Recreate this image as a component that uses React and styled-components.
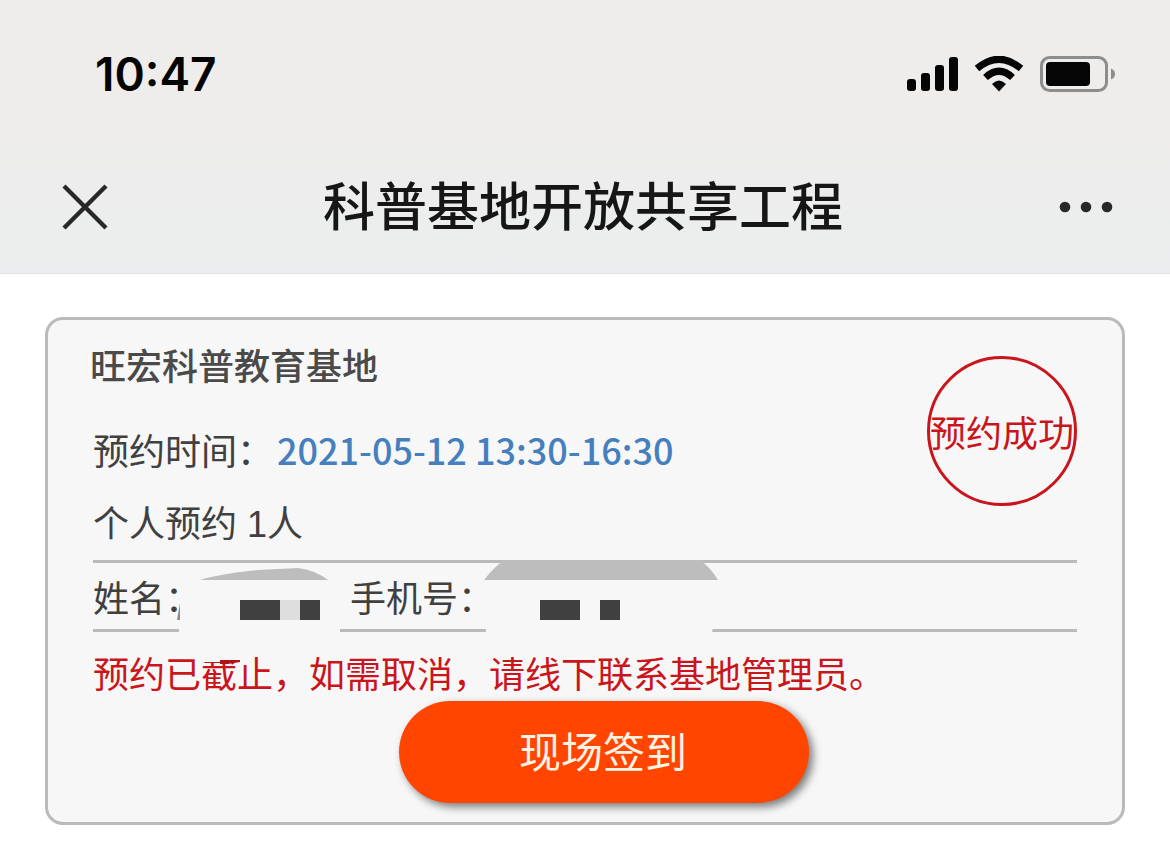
import React from "react";
import styled, { createGlobalStyle } from "styled-components";

const GlobalStyle = createGlobalStyle`
  * {
    box-sizing: border-box;
  }

  body {
    margin: 0;
    background-color: #fff;
    color: #404040;
    font-family: "Noto Sans CJK SC", sans-serif;
  }
`;

const Header = styled.header`
  background: linear-gradient(#eeedeb, #eeedec 50%, #ebedee);
  border-bottom: 1px solid #dedede;
`;

const StatusBar = styled.div`
  height: 140px;
  padding: 8px 54px 0 95px;
  display: flex;
  align-items: center;
  justify-content: space-between;
`;

const Clock = styled.time`
  font-family: Inter, sans-serif;
  font-size: 46px;
  font-weight: 600;
  line-height: 56px;
  color: #050505;
`;

const StatusIcons = styled.div`
  display: flex;
  align-items: center;
  gap: 16px;

  svg {
    display: block;
  }
`;

const NavBar = styled.nav`
  height: 133px;
  padding: 0 56px 0 60px;
  display: grid;
  grid-template-columns: 50px 1fr 58px;
  align-items: center;
`;

const PageTitle = styled.h1`
  margin: 0;
  padding-bottom: 6px;
  font-size: 52px;
  font-weight: 500;
  line-height: 72px;
  text-align: center;
  color: #161616;
`;

const IconButton = styled.button`
  height: 50px;
  padding: 0;
  border: 0;
  background: none;
  display: flex;
  align-items: center;
  justify-content: ${({ $end }) => ($end ? "flex-end" : "flex-start")};
`;

const Main = styled.main`
  padding: 43px 45px 34px;
`;

const Card = styled.section`
  padding: 17px 45px 19px;
  border: 3px solid #bababa;
  border-radius: 18px;
  background-color: #f7f7f7;
  font-size: 36px;
  line-height: 54px;
`;

const Summary = styled.div`
  display: flex;
  justify-content: space-between;
  align-items: flex-start;
`;

const BaseName = styled.h2`
  margin: 0 0 31px -3px;
  font-size: 36px;
  font-weight: 500;
  line-height: 54px;
  color: #4a4a4a;
`;

const Line = styled.p`
  margin: 0 0 18px;

  &:last-child {
    margin-bottom: 12px;
  }
`;

const Count = styled.span`
  font-family: "Liberation Sans", "Noto Sans CJK SC", sans-serif;
  line-height: 1;
`;

const DateText = styled.span`
  margin-left: 4px;
  font-weight: 500;
  color: #457fbe;
`;

const Badge = styled.div`
  width: 150px;
  height: 150px;
  margin-top: 19px;
  border: 3px solid #c9151b;
  border-radius: 50%;
  display: flex;
  align-items: center;
  justify-content: center;
  white-space: nowrap;
  color: #c9151b;
`;

const Contact = styled.dl`
  position: relative;
  height: 72px;
  margin: 0;
  border-top: 3px solid #bababa;
  border-bottom: 3px solid #bababa;
  display: flex;
  align-items: center;
`;

const Term = styled.dt`
  width: ${({ $width }) => $width}px;
`;

const Value = styled.dd`
  width: 149px;
  margin: 0;
`;

const Mask = styled.svg`
  position: absolute;
  top: -3px;
  left: 0;
`;

const Notice = styled.p`
  margin: 13px 0 0;
  color: #c9151b;
`;

const CheckIn = styled.button`
  width: 410px;
  height: 102px;
  padding: 0 2px 4px 0;
  border: 0;
  border-radius: 51px;
  background-color: #ff4500;
  box-shadow: 4px 4px 8px rgba(0, 0, 0, 0.5);
  font-family: inherit;
  font-size: 42px;
  line-height: 60px;
  color: #fff4e4;
`;

const Actions = styled.div`
  margin-top: 2px;
  padding-left: 38px;
  display: flex;
  justify-content: center;
`;

const SignalIcon = () => (
  <svg width="51" height="36" viewBox="0 0 51 36" fill="#050505" aria-hidden="true">
    <rect x="0" y="23" width="9" height="12" rx="3" />
    <rect x="14" y="17" width="9" height="18" rx="3" />
    <rect x="28" y="9" width="9" height="26" rx="3" />
    <rect x="42" y="1" width="9" height="34" rx="3" />
  </svg>
);

const WifiIcon = () => (
  <svg width="50" height="36" viewBox="0 0 50 36" fill="none" aria-hidden="true">
    <path d="M3 12.5Q25 -6 47 12.5" stroke="#050505" strokeWidth="7" />
    <path d="M11.5 21.5Q25 9 38.5 21.5" stroke="#050505" strokeWidth="7" />
    <path d="M18 28Q25 21 32 28L25 35.5Z" fill="#050505" />
  </svg>
);

const BatteryIcon = () => (
  <svg width="76" height="36" viewBox="0 0 76 36" aria-hidden="true">
    <rect x="1.5" y="1.5" width="65" height="33" rx="8" fill="none" stroke="#8d8d8d" strokeWidth="3" />
    <rect x="6" y="6" width="44" height="24" rx="4" fill="#050505" />
    <path d="M71 12.5Q75 14 75 18T71 23.5Z" fill="#8d8d8d" />
  </svg>
);

const CloseIcon = () => (
  <svg width="50" height="50" viewBox="0 0 50 50" aria-hidden="true">
    <path d="M4 4L46 46M46 4L4 46" stroke="#28282a" strokeWidth="4.4" />
  </svg>
);

const MoreIcon = () => (
  <svg width="56" height="12" viewBox="0 0 56 12" fill="#28282a" aria-hidden="true">
    <circle cx="7" cy="6" r="5.3" />
    <circle cx="28" cy="6" r="5.3" />
    <circle cx="49" cy="6" r="5.3" />
  </svg>
);

const ContactMask = () => (
  <Mask width="640" height="106" viewBox="0 0 640 106" aria-hidden="true">
    <path d="M87 20H247V74H147V102H111V100H107V74H86Z" fill="#f7f7f7" />
    <path d="M107 20Q125 14 165 10L205 8Q222 10 235 20Z" fill="#bdbdbd" />
    <path d="M87 43V60H84Z" fill="#8c8c8c" />
    <path d="M127 100H147V102L135 104H127Z" fill="#b01218" />
    <rect x="147" y="40" width="40" height="20" fill="#404040" />
    <rect x="187" y="40" width="20" height="20" fill="#dedede" />
    <rect x="207" y="40" width="20" height="20" fill="#404040" />
    <path d="M391 20H625L619 74H393Z" fill="#f7f7f7" />
    <path d="M391 20Q400 8 411 0H607Q618 8 625 20Z" fill="#bdbdbd" />
    <rect x="447" y="40" width="40" height="20" fill="#404040" />
    <rect x="507" y="40" width="20" height="20" fill="#404040" />
  </Mask>
);

const App = () => {
  return (
    <>
      <GlobalStyle />
      <Header>
        <StatusBar>
          <Clock>10:47</Clock>
          <StatusIcons>
            <SignalIcon />
            <WifiIcon />
            <BatteryIcon />
          </StatusIcons>
        </StatusBar>
        <NavBar>
          <IconButton type="button" aria-label="关闭">
            <CloseIcon />
          </IconButton>
          <PageTitle>科普基地开放共享工程</PageTitle>
          <IconButton type="button" aria-label="更多" $end>
            <MoreIcon />
          </IconButton>
        </NavBar>
      </Header>
      <Main>
        <Card>
          <Summary>
            <div>
              <BaseName>旺宏科普教育基地</BaseName>
              <Line>
                预约时间：<DateText>2021-05-12 13:30-16:30</DateText>
              </Line>
              <Line>
                个人预约<Count> 1</Count>人
              </Line>
            </div>
            <Badge>预约成功</Badge>
          </Summary>
          <Contact>
            <Term $width={108}>姓名：</Term>
            <Value />
            <Term $width={144}>手机号：</Term>
            <Value />
            <ContactMask />
          </Contact>
          <Notice>预约已截止，如需取消，请线下联系基地管理员。</Notice>
          <Actions>
            <CheckIn type="button">现场签到</CheckIn>
          </Actions>
        </Card>
      </Main>
    </>
  );
};

export default App;
